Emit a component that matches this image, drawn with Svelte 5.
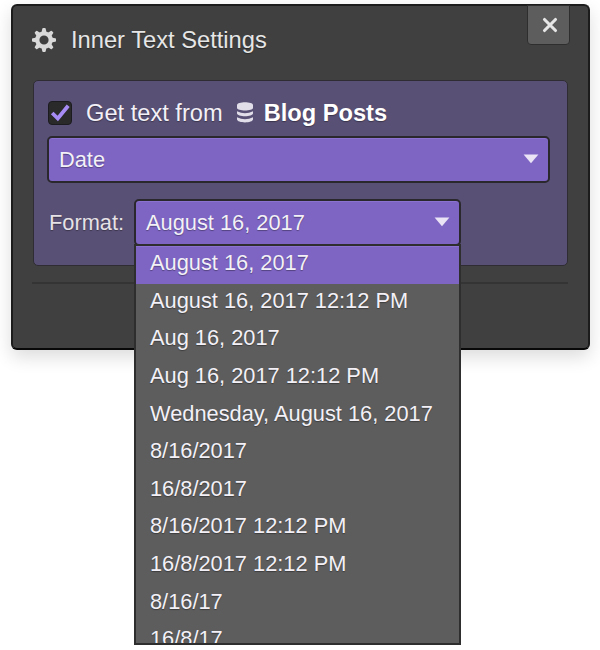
<script>
  const formats = [
    'August 16, 2017',
    'August 16, 2017 12:12 PM',
    'Aug 16, 2017',
    'Aug 16, 2017 12:12 PM',
    'Wednesday, August 16, 2017',
    '8/16/2017',
    '16/8/2017',
    '8/16/2017 12:12 PM',
    '16/8/2017 12:12 PM',
    '8/16/17',
    '16/8/17'
  ];
  let selected = $state(0);
</script>

{#snippet caret()}
  <svg class="caret" width="16" height="10" viewBox="0 0 16 10"><path d="M.6.5h14.8L8 9.3z" fill="#e9e3f5" /></svg>
{/snippet}

<main>
  <section class="panel">
    <header>
      <svg class="gear" width="24" height="24" viewBox="-12 -12 24 24">
        <g fill="#d9d9d9">
          {#each [0, 45, 90, 135, 180, 225, 270, 315] as angle}
            <path d="M-2.6-7 L-1.7-11.2 Q-1.5-12 -.9-12 H.9 Q1.5-12 1.7-11.2 L2.6-7z" transform="rotate({angle})" />
          {/each}
        </g>
        <circle r="6.7" fill="none" stroke="#d9d9d9" stroke-width="4.2" />
      </svg>
      <h1>Inner Text Settings</h1>
      <button class="close" aria-label="Close">
        <svg width="16" height="16" viewBox="0 0 16 16"><path d="M2.5 2.5l11 11M13.5 2.5l-11 11" fill="none" stroke="#e6e6e6" stroke-width="3.1" stroke-linecap="round" /></svg>
      </button>
    </header>

    <div class="binding">
      <div class="source">
        <span class="check">
          <svg width="20" height="20" viewBox="0 0 20 20"><path d="M2.2 10L7.8 15.5L18.2 2.7" fill="none" stroke="#a78bf5" stroke-width="3.8" /></svg>
        </span>
        <span class="get">Get text from</span>
        <svg class="db" width="16" height="21" viewBox="0 0 16 21" fill="#e1deea">
          <path d="M0 3C0-.7 16-.7 16 3V6C16 9.3 0 9.3 0 6z" />
          <path d="M0 9.2Q8 13.2 16 9.2V11.3C16 15.2 0 15.2 0 11.3z" />
          <path d="M0 15.2Q8 19.2 16 15.2V17.3C16 21.4 0 21.4 0 17.3z" />
        </svg>
        <strong>Blog Posts</strong>
      </div>
      <div class="select">Date{@render caret()}</div>
      <div class="row">
        <span class="label">Format:</span>
        <div class="picker">
          <div class="select format">{formats[selected]}{@render caret()}</div>
          <ul>
            {#each formats as format, i}
              <li class:active={i === selected}>{format}</li>
            {/each}
          </ul>
        </div>
      </div>
    </div>
    <hr />
  </section>
</main>

<style>
  :global(body) { margin: 0; background: #fff; }
  * { box-sizing: border-box; }
  main {
    width: 600px;
    height: 650px;
    padding: 4px 10px 0 11px;
    overflow: hidden;
    font: 21.8px/26px "Liberation Sans", Arial, sans-serif;
    color: #f3f1f7;
    text-shadow: 0 1px 1px rgba(0, 0, 0, .35);
  }
  .panel {
    height: 346px;
    padding: 0 20px;
    background: #404040;
    border: 2px solid #1c1c1c;
    border-bottom-color: #080808;
    border-radius: 6px;
    box-shadow: 0 7px 18px rgba(0, 0, 0, .14);
  }
  header { display: flex; height: 74px; padding-top: 21px; }
  .gear { margin: 1px 15px 0 -1px; }
  h1 { margin: 0; font-size: 23.7px; font-weight: 400; line-height: 26px; color: #e6e6e6; }
  .close {
    display: flex;
    align-items: center;
    justify-content: center;
    width: 43px;
    height: 40px;
    margin: -22px -2px 0 auto;
    padding: 0 0 1px 3px;
    background: #5d5d5d;
    border: 1.5px solid #2e2e2e;
    border-radius: 0 0 4px 4px;
  }
  .binding {
    height: 186px;
    padding: 18px 17px 0 13px;
    background: #595075;
    border: 1.5px solid #2f2d33;
    border-radius: 5px;
  }
  .source { display: flex; align-items: center; height: 28px; margin-bottom: 9px; }
  .check {
    display: flex;
    align-items: center;
    justify-content: center;
    width: 24px;
    height: 24px;
    margin-left: 1px;
    background: #2a2a2a;
    border: 1px solid #1c1b20;
    border-radius: 4px;
  }
  .get { margin-left: 14px; font-size: 23.65px; white-space: nowrap; }
  .db { margin: -2px 11px 0 14px; }
  strong { font-size: 23.65px; color: #fff; white-space: nowrap; }
  .select {
    display: flex;
    align-items: center;
    justify-content: space-between;
    height: 47px;
    padding: 0 9px 0 10px;
    background: #7e65c4;
    border: 2px solid #2b282d;
    border-radius: 5px;
    box-shadow: inset 0 1px 0 #8b72d1;
  }
  .caret { margin-top: -1px; }
  .row { display: flex; align-items: center; margin-top: 16px; }
  .label { width: 87px; padding-left: 2px; color: #e6e2e6; }
  .picker { position: relative; width: 327px; }
  ul {
    position: absolute;
    top: 45px;
    left: 0;
    width: 327px;
    height: 401px;
    margin: 0;
    padding: 0;
    overflow: hidden;
    list-style: none;
    background: #5d5d5d;
    border: 2px solid #2e2e2e;
  }
  li { height: 37.65px; padding-left: 14px; line-height: 33px; white-space: nowrap; }
  .active { background: #7e65c4; box-shadow: inset 0 1px 0 #8b72d1; }
  hr { height: 2px; margin: 16px 0 0 -1px; border: 0; background: #343434; }
</style>
